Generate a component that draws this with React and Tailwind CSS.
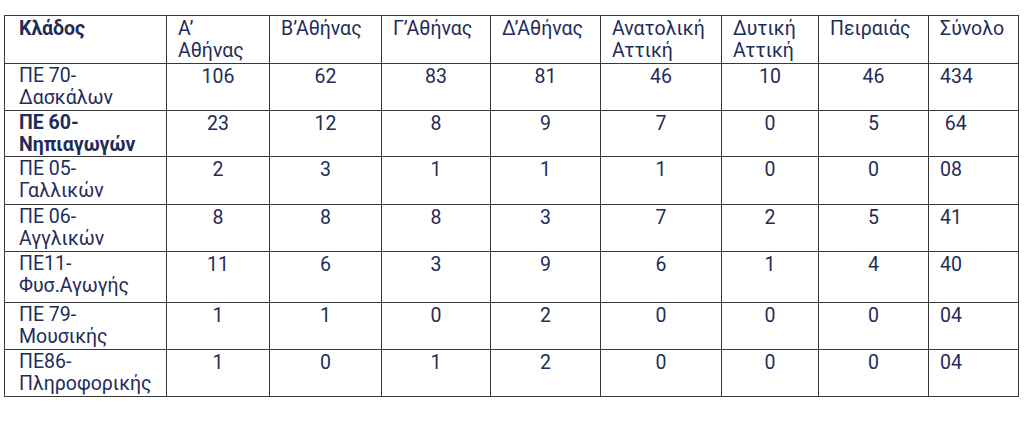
import React from "react";

const cols = [162, 103, 112, 109, 110, 121, 97, 110, 90];

const headers = ["Α’\nΑθήνας", "Β’Αθήνας", "Γ’Αθήνας", "Δ’Αθήνας", "Ανατολική\nΑττική", "Δυτική\nΑττική", "Πειραιάς", "Σύνολο"];

const rows = [
  { name: "ΠΕ 70-\nΔασκάλων", vals: ["106", "62", "83", "81", "46", "10", "46"], total: "434", h: 47 },
  { name: "ΠΕ 60-\nΝηπιαγωγών", bold: true, vals: ["23", "12", "8", "9", "7", "0", "5"], total: "\u00a064", h: 45 },
  { name: "ΠΕ 05-\nΓαλλικών", vals: ["2", "3", "1", "1", "1", "0", "0"], total: "08", h: 48 },
  { name: "ΠΕ 06-\nΑγγλικών", vals: ["8", "8", "8", "3", "7", "2", "5"], total: "41", h: 47 },
  { name: "ΠΕ11-\nΦυσ.Αγωγής", vals: ["11", "6", "3", "9", "6", "1", "4"], total: "40", h: 51 },
  { name: "ΠΕ 79-\nΜουσικής", vals: ["1", "1", "0", "2", "0", "0", "0"], total: "04", h: 47 },
  { name: "ΠΕ86-\nΠληροφορικής", vals: ["1", "0", "1", "2", "0", "0", "0"], total: "04", h: 47 },
];

export default function App() {
  return (
    <div className="w-[1024px] h-[424px] bg-white pt-[15px] pl-[4px] font-['Roboto','Noto_Sans',sans-serif] text-[19.5px] leading-[22px] text-[#1f2c5a]">
      <table className="border-collapse table-fixed w-[1014px]">
        <colgroup>
          {cols.map((w, i) => (
            <col key={i} style={{ width: w }} />
          ))}
        </colgroup>
        <tbody>
          {/* header row */}
          <tr className="h-[48px]">
            <td className="border-[1.5px] border-[#3a3a3a] align-top pl-[14px] pt-[2px] font-bold whitespace-pre-line">Κλάδος</td>
            {headers.map((h, i) => (
              <td key={i} className="border-[1.5px] border-[#3a3a3a] align-top pl-[11px] pt-[2px] whitespace-pre-line">
                {h}
              </td>
            ))}
          </tr>
          {rows.map((r, i) => (
            <tr key={i} style={{ height: r.h }}>
              <td
                className={
                  "border-[1.5px] border-[#3a3a3a] align-top pl-[14px] pt-[1px] whitespace-pre-line " +
                  (r.bold ? "font-bold" : "")
                }
              >
                {r.name}
              </td>
              {r.vals.map((v, j) => (
                <td key={j} className="border-[1.5px] border-[#3a3a3a] align-top text-center pt-[2px]">
                  {v}
                </td>
              ))}
              <td className="border-[1.5px] border-[#3a3a3a] align-top pl-[11px] pt-[2px]">{r.total}</td>
            </tr>
          ))}
        </tbody>
      </table>
    </div>
  );
}
